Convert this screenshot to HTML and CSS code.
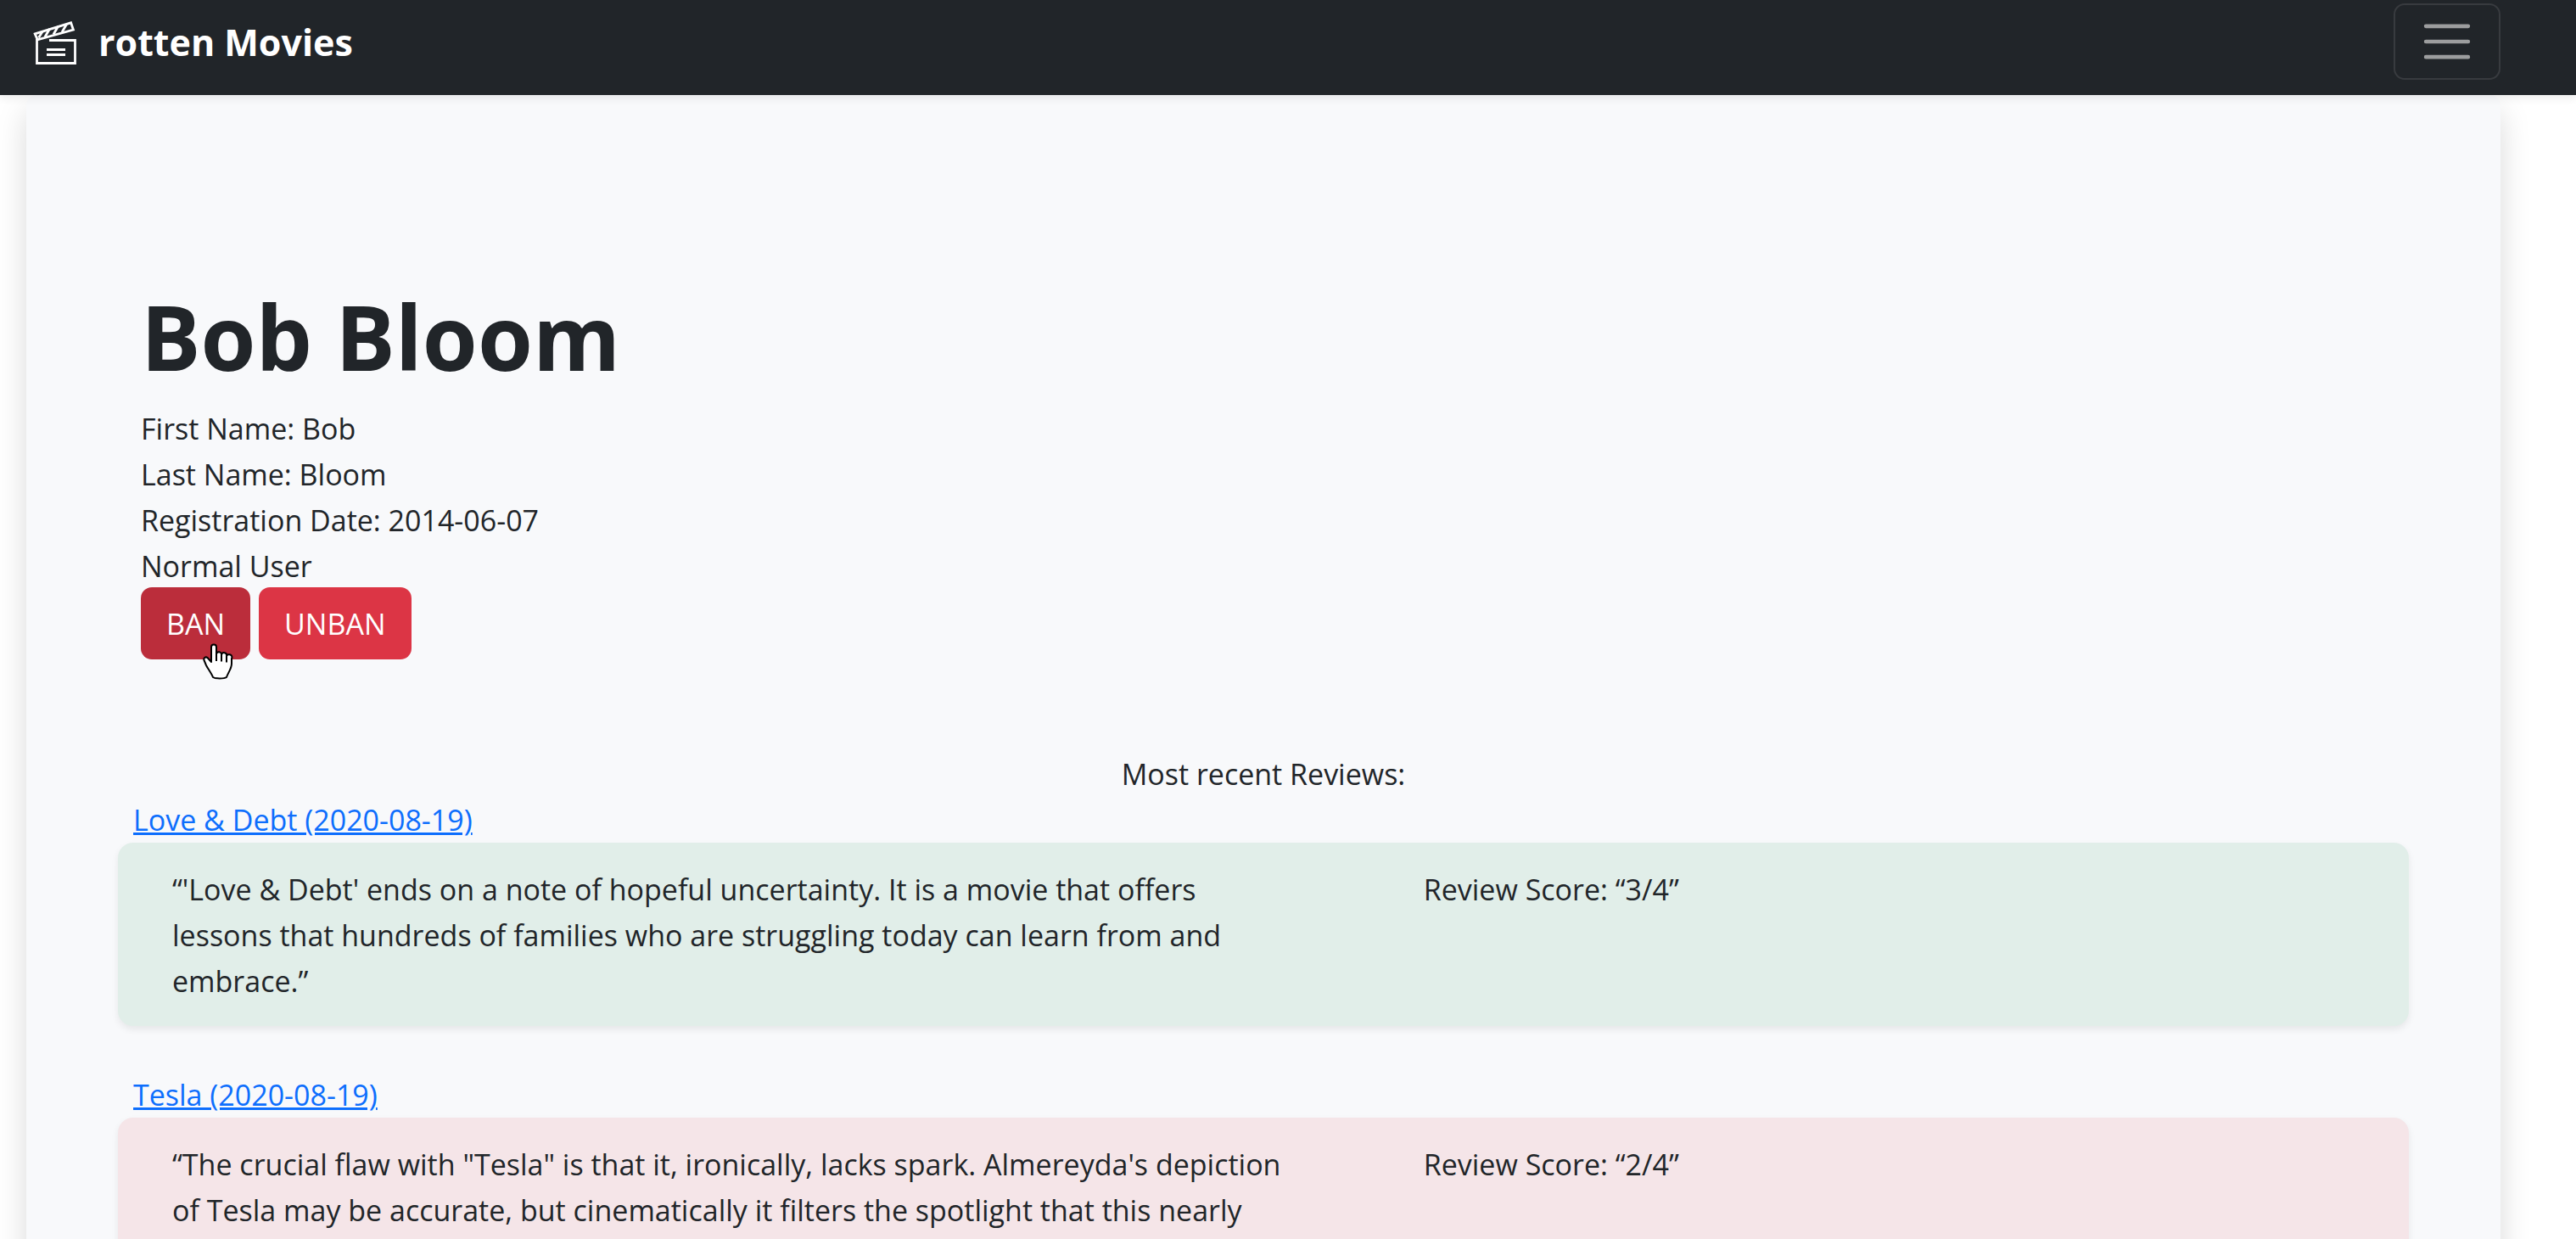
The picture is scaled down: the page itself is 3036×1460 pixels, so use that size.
FILE: index.html
```html
<!DOCTYPE html>
<html lang="en">
<head>
<meta charset="utf-8">
<title>rotten Movies</title>
<link rel="stylesheet" href="styles.css">
</head>
<body>
<header class="navbar">
  <a class="brand" href="#">
    <svg class="brand-icon" viewBox="0 0 54 54" aria-hidden="true">
      <g fill="none" stroke="#fff" stroke-width="2.8">
        <path d="M20 24.500H50.500V51.500H5.500V23"/>
        <path d="M3.200 16.800L45.600 3.800L48.400 12L6.200 23.800Z"/>
        <path d="M7.500 21.500l4.500-7.300M15 20.500l5.500-9.500M25 17.500l5.500-9.500M35 15l5.500-9.500"/>
        <path d="M17 35.500h22M17 41.500h22"/>
      </g>
    </svg>
    <span>rotten Movies</span>
  </a>
  <button class="toggler" type="button" aria-label="Toggle navigation">
    <svg class="toggler-icon" viewBox="0 0 30 30" aria-hidden="true"><path d="M4 7h22M4 15h22M4 23h22" fill="none" stroke="#9c9d9e" stroke-width="2" stroke-linecap="round"/></svg>
  </button>
</header>
<main class="panel">
  <section class="profile">
    <h1 class="name">Bob Bloom</h1>
    <p class="line">First Name: Bob</p>
    <p class="line">Last Name: Bloom</p>
    <p class="line">Registration Date: 2014-06-07</p>
    <p class="line">Normal User</p>
    <div class="actions">
      <button class="btn btn-active" type="button">BAN
        <svg class="pointer" viewBox="0 0 36 44" aria-hidden="true"><path d="M10 17V4.500a3 3 0 0 1 6 0V13a3 3 0 0 1 6 .5a3 3 0 0 1 6 1.500a3 3 0 0 1 6 3V24c0 6-4 10-6 16c-3 2-13 2-16 0C10 35 6 30 4 26L1.500 20c-1-3 2-4.500 4-3L10 22zM16 12v9M22 14v7.500M28 15.500v7" fill="#fff" stroke="#000" stroke-width="2" stroke-linejoin="round"/></svg>
      </button>
      <button class="btn" type="button">UNBAN</button>
    </div>
  </section>
  <section class="reviews">
    <h2 class="reviews-title">Most recent Reviews:</h2>
    <article class="review">
      <a class="review-link" href="#">Love &amp; Debt (2020-08-19)</a>
      <div class="review-card fresh">
        <p class="line">“'Love &amp; Debt' ends on a note of hopeful uncertainty. It is a movie that offers lessons that hundreds of families who are struggling today can learn from and embrace.”</p>
        <p class="line">Review Score: “3/4”</p>
      </div>
    </article>
    <article class="review">
      <a class="review-link" href="#">Tesla (2020-08-19)</a>
      <div class="review-card rotten">
        <p class="line">“The crucial flaw with "Tesla" is that it, ironically, lacks spark. Almereyda's depiction of Tesla may be accurate, but cinematically it filters the spotlight that this nearly</p>
        <p class="line">Review Score: “2/4”</p>
      </div>
    </article>
  </section>
</main>
</body>
</html>
```
FILE: styles.css
```css
* { box-sizing: border-box; }

html { height: 100%; overflow: hidden; }

body {
  margin: 0;
  height: 100%;
  overflow: hidden;
  background: #fff;
  color: #212529;
  font: 34px/54px "Open Sans", "Noto Sans", sans-serif;
}

.navbar {
  position: relative;
  z-index: 1;
  display: flex;
  justify-content: space-between;
  align-items: flex-start;
  padding: 4px 89px 18px 38px;
  background: #212529;
  box-shadow: 0 4px 9px rgba(0, 0, 0, 0.075);
}

.brand {
  display: flex;
  align-items: center;
  gap: 24px;
  height: 92px;
  margin-bottom: -2px;
  color: #fff;
  font-size: 43px;
  font-weight: 700;
  text-decoration: none;
}

.brand-icon { width: 54px; height: 54px; }

.toggler {
  display: flex;
  align-items: center;
  justify-content: center;
  width: 126px;
  height: 90px;
  padding: 0;
  border: 2px solid #383b3f;
  border-radius: 13px;
  background: none;
}

.toggler-icon { width: 68px; height: 68px; }

.panel {
  margin: 0 89px 0 31px;
  padding: 220px 108px 54px;
  border-radius: 13px;
  background: #f8f9fb;
  box-shadow: 0 18px 36px rgba(0, 0, 0, 0.15);
}

.profile { padding: 0 27px 108px; }

.name {
  margin: 0 0 16px;
  font-size: 105px;
  line-height: 130px;
  font-weight: 700;
}

.line { margin: 0; }

.actions { display: flex; gap: 10px; margin-top: -2px; }

.btn {
  position: relative;
  height: 85px;
  padding: 0 30px;
  border: 0;
  border-radius: 13px;
  background: #dc3545;
  color: #fff;
  font: inherit;
}

.btn-active { background: #bb2d3b; }

.pointer {
  position: absolute;
  left: 73px;
  top: 66px;
  width: 36px;
  height: 44px;
}

.reviews-title {
  margin: 0;
  font: inherit;
  text-align: center;
}

.review { margin-bottom: 54px; }

.review-link {
  display: inline-block;
  margin-left: 18px;
  color: #0d6efd;
  text-decoration-thickness: 3px;
  vertical-align: top;
}

.review-card {
  display: grid;
  grid-template-columns: 51% 1fr;
  column-gap: 163px;
  min-height: 216px;
  padding: 28px 64px 26px;
  border-radius: 18px;
  box-shadow: 0 4px 9px rgba(0, 0, 0, 0.075);
}

.fresh { background: #e1eee9; }

.rotten { background: #f5e5e8; }
```
